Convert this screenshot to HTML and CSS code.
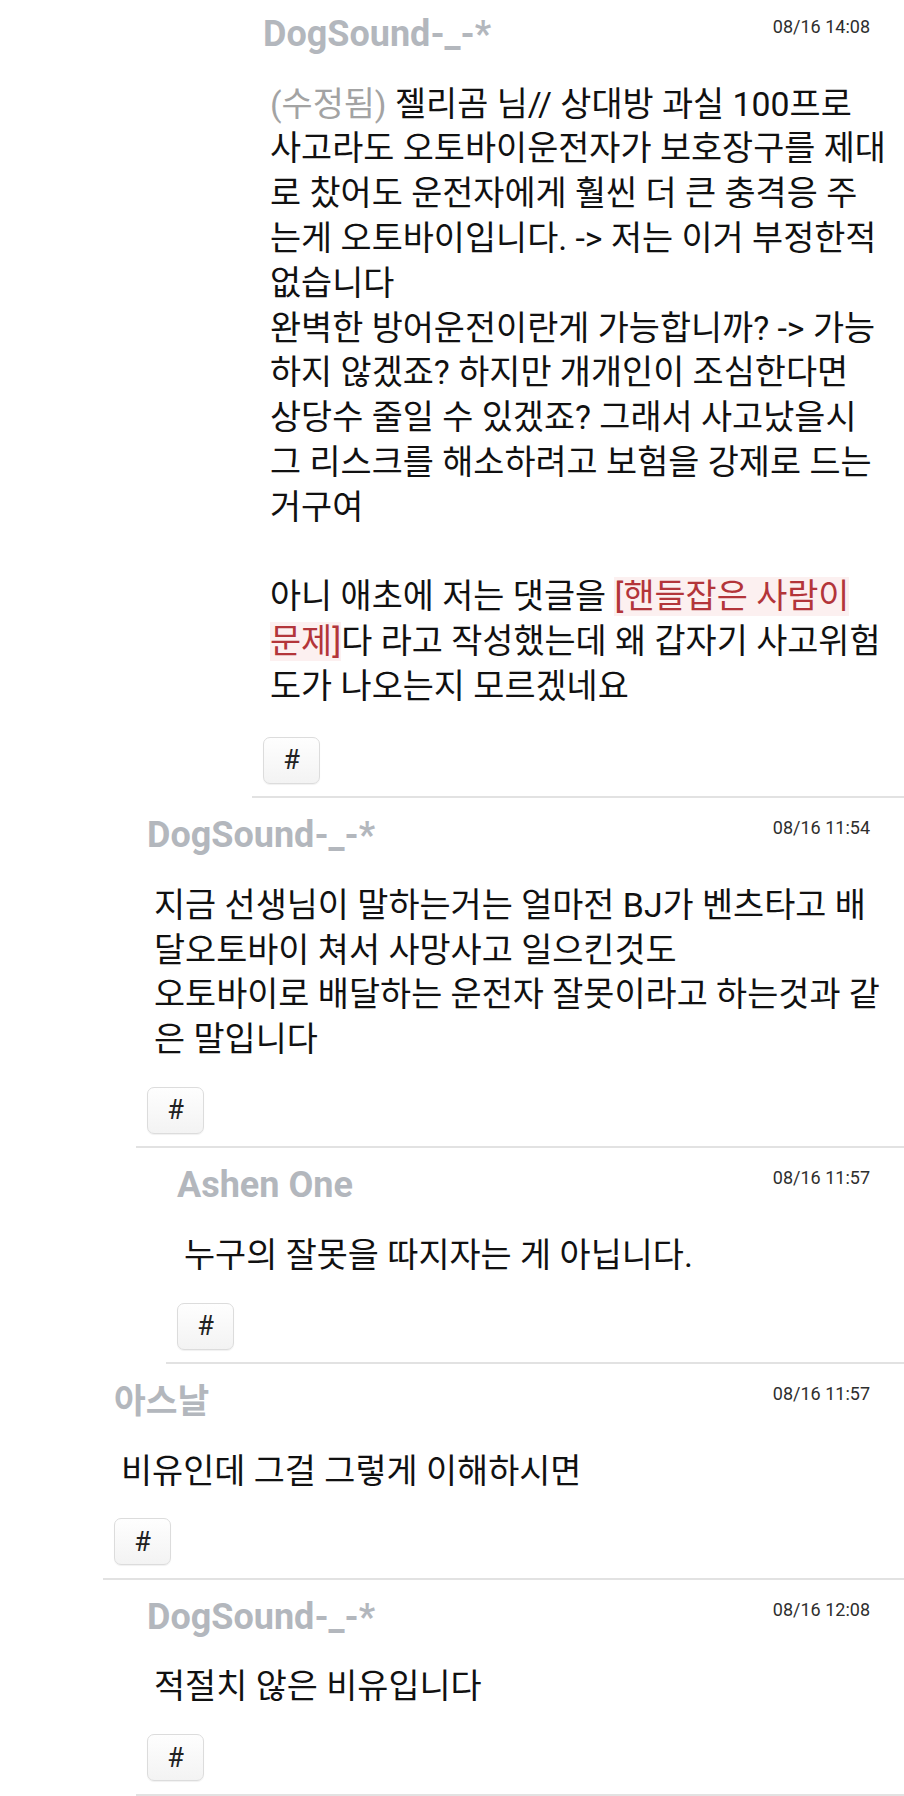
FILE: index.html
```html
<!DOCTYPE html>
<html lang="ko">
<head>
<meta charset="utf-8">
<title>댓글</title>
<link rel="stylesheet" href="styles.css">
</head>
<body>
<div class="thread">
  <article class="comment depth-4 first">
    <header class="head">
      <span class="name">DogSound-_-*</span>
      <time class="time">08/16 14:08</time>
    </header>
    <p class="text"><span class="edited">(수정됨)</span> 젤리곰 님// 상대방 과실 100프로<br>사고라도 오토바이운전자가 보호장구를 제대<br>로 찼어도 운전자에게 훨씬 더 큰 충격응 주<br>는게 오토바이입니다. -&gt; 저는 이거 부정한적<br>없습니다<br>완벽한 방어운전이란게 가능합니까? -&gt; 가능<br>하지 않겠죠? 하지만 개개인이 조심한다면<br>상당수 줄일 수 있겠죠? 그래서 사고났을시<br>그 리스크를 해소하려고 보험을 강제로 드는<br>거구여<br><br>아니 애초에 저는 댓글을 <span class="mark">[핸들잡은 사람이<br>문제]</span>다 라고 작성했는데 왜 갑자기 사고위험<br>도가 나오는지 모르겠네요</p>
    <button class="tag" type="button">#</button>
  </article>

  <article class="comment depth-1">
    <header class="head">
      <span class="name">DogSound-_-*</span>
      <time class="time">08/16 11:54</time>
    </header>
    <p class="text">지금 선생님이 말하는거는 얼마전 BJ가 벤츠타고 배<br>달오토바이 쳐서 사망사고 일으킨것도<br>오토바이로 배달하는 운전자 잘못이라고 하는것과 같<br>은 말입니다</p>
    <button class="tag" type="button">#</button>
  </article>

  <article class="comment depth-2">
    <header class="head">
      <span class="name">Ashen One</span>
      <time class="time">08/16 11:57</time>
    </header>
    <p class="text">누구의 잘못을 따지자는 게 아닙니다.</p>
    <button class="tag" type="button">#</button>
  </article>

  <article class="comment depth-0">
    <header class="head">
      <span class="name name-ko">아스날</span>
      <time class="time">08/16 11:57</time>
    </header>
    <p class="text">비유인데 그걸 그렇게 이해하시면</p>
    <button class="tag" type="button">#</button>
  </article>

  <article class="comment depth-1">
    <header class="head">
      <span class="name">DogSound-_-*</span>
      <time class="time">08/16 12:08</time>
    </header>
    <p class="text">적절치 않은 비유입니다</p>
    <button class="tag" type="button">#</button>
  </article>
</div>
</body>
</html>
```

FILE: styles.css
```css
html, body {
  margin: 0;
  padding: 0;
  background: #ffffff;
}

body {
  font-family: Roboto, "Noto Sans CJK KR", sans-serif;
  color: #111111;
  overflow: hidden;
}

.thread {
  display: flex;
  flex-direction: column;
}

.comment {
  padding: 17px 0 12.4px 11px;
  border-bottom: 2px solid #e2e2e2;
}

.comment.first {
  padding-top: 14px;
}

.depth-0 { margin-left: 103px; }
.depth-1 { margin-left: 136px; }
.depth-2 { margin-left: 166px; }
.depth-4 { margin-left: 252px; }

.head {
  display: flex;
  justify-content: space-between;
  align-items: flex-start;
  height: 40px;
  padding-right: 34px;
}

.name {
  font-family: Roboto, "Noto Sans CJK KR", sans-serif;
  font-weight: 700;
  font-size: 36px;
  line-height: 40px;
  color: #b3b7bd;
}

.name-ko {
  font-size: 34.5px;
}

.time {
  margin-top: 3px;
  font-size: 18px;
  line-height: 20px;
  color: #2e2e2e;
}

.text {
  margin: 28.6px 0 0;
  padding-left: 7px;
  font-size: 33.8px;
  line-height: 44.8px;
  color: #111111;
  white-space: nowrap;
}

.edited {
  color: #a3a3a3;
}

.mark {
  color: #b3353a;
  background: #fcf0f0;
}

.tag {
  display: flex;
  align-items: center;
  justify-content: center;
  margin-top: 24px;
  width: 57px;
  height: 47px;
  padding: 0;
  border: 1px solid #dcdcdc;
  border-radius: 7px;
  background: linear-gradient(#fefefe, #f3f3f3);
  box-shadow: 0 1px 1px rgba(0, 0, 0, 0.06);
  font-family: Roboto, sans-serif;
  font-size: 27px;
  color: #222222;
}

.first .tag {
  margin-top: 27px;
}
```
